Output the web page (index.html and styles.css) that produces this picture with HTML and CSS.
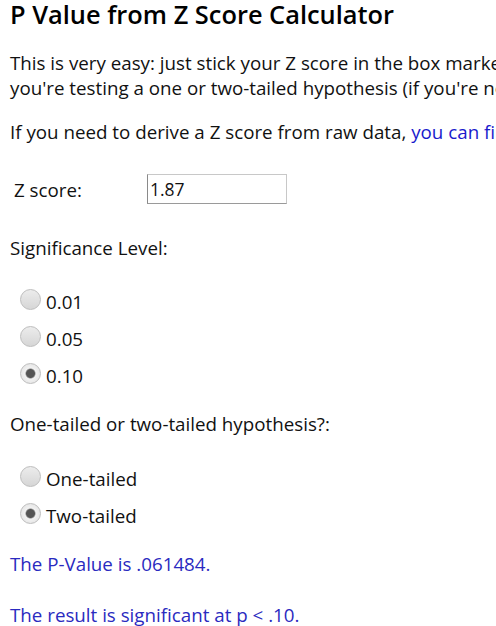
FILE: index.html
```html
<!DOCTYPE html>
<html lang="en">
<head>
    <meta charset="UTF-8">
    <meta name="viewport" content="width=device-width, initial-scale=1.0">
    <title>P Value from Z Score Calculator</title>
    <link rel="stylesheet" href="styles.css">
</head>
<body>

    <h1 class="titulo">P Value from Z Score Calculator</h1>

    <p class="intro">This is very easy: just stick your Z score in the box marked Z score, select your significance level and whether<br>you're testing a one or two-tailed hypothesis (if you're not sure, go with the defaults), then press the button!</p>

    <p class="intro intro--raw">If you need to derive a Z score from raw data, <a href="#">you can find a Z test calculator here</a>.</p>

    <!-- Formulario -->
    <form class="calc">
        <div class="calc__fila">
            <label class="calc__label" for="zscore">Z score:</label>
            <input class="calc__input" id="zscore" type="text" value="1.87">
        </div>

        <div class="calc__grupo calc__grupo--sig">
            <p class="calc__titulo">Significance Level:</p>
            <label class="calc__opcion"><input type="radio" name="sig" value="0.01"> 0.01</label>
            <label class="calc__opcion"><input type="radio" name="sig" value="0.05"> 0.05</label>
            <label class="calc__opcion"><input type="radio" name="sig" value="0.10" checked> 0.10</label>
        </div>

        <div class="calc__grupo calc__grupo--tail">
            <p class="calc__titulo">One-tailed or two-tailed hypothesis?:</p>
            <label class="calc__opcion"><input type="radio" name="tail" value="1"> One-tailed</label>
            <label class="calc__opcion"><input type="radio" name="tail" value="2" checked> Two-tailed</label>
        </div>
    </form>

    <!-- Resultado -->
    <p class="resultado">The P-Value is .061484.</p>
    <p class="resultado resultado--sig">The result is significant at p &lt; .10.</p>

</body>
</html>
```

FILE: styles.css
```css
* {
    box-sizing: border-box;
}
body {
    font-family: "Open Sans", Arial, sans-serif;
    font-size: 18.75px;
    line-height: 25px;
    color: #111;
    background-color: #fff;
    margin: 0;
    padding: 0 0 0 10px;
    overflow: hidden;
    white-space: nowrap;
}

.titulo {
    font-size: 25.4px;
    font-weight: 600;
    line-height: 28px;
    margin: 0;
    color: #000;
}

.intro {
    margin: 22px 0 0;
}

.intro--raw {
    margin-top: 19px;
}

.intro a {
    color: #1a1acc;
    text-decoration: none;
}

/* Estilos del formulario */
.calc {
    margin: 0;
}

.calc__fila {
    display: flex;
    align-items: center;
    margin-top: 30px;
}

.calc__label {
    width: 137px;
    padding-left: 4px;
}

.calc__input {
    width: 140px;
    height: 30px;
    font-family: inherit;
    font-size: 17.5px;
    color: #111;
    padding: 0 2px;
    border: 1px solid #c8c8c8;
    border-left-color: #8a8a8a;
    border-bottom-color: #9a9a9a;
    outline: none;
}

.calc__grupo {
    display: flex;
    flex-direction: column;
}

.calc__grupo--sig {
    margin-top: 31px;
}

.calc__titulo {
    margin: 0 0 23px;
}

.calc__grupo--tail .calc__titulo {
    margin-top: 17px;
    margin-bottom: 24px;
}

.calc__opcion {
    display: flex;
    align-items: center;
    height: 37px;
    padding-left: 10px;
}

.calc__opcion input {
    appearance: none;
    -webkit-appearance: none;
    width: 21px;
    height: 21px;
    margin: -5px 5px 0 0;
    border-radius: 50%;
    border: 1px solid #bdbdbd;
    background: linear-gradient(#ececec, #d6d6d6);
}

.calc__opcion input:checked {
    background: radial-gradient(circle, #555 0, #555 4px, #f2f2f2 5.5px, #dcdcdc 100%);
}

/* Resultado */
.resultado {
    color: #2a2ac0;
    margin: 17px 0 0;
}

.resultado--sig {
    margin-top: 26px;
}
```
